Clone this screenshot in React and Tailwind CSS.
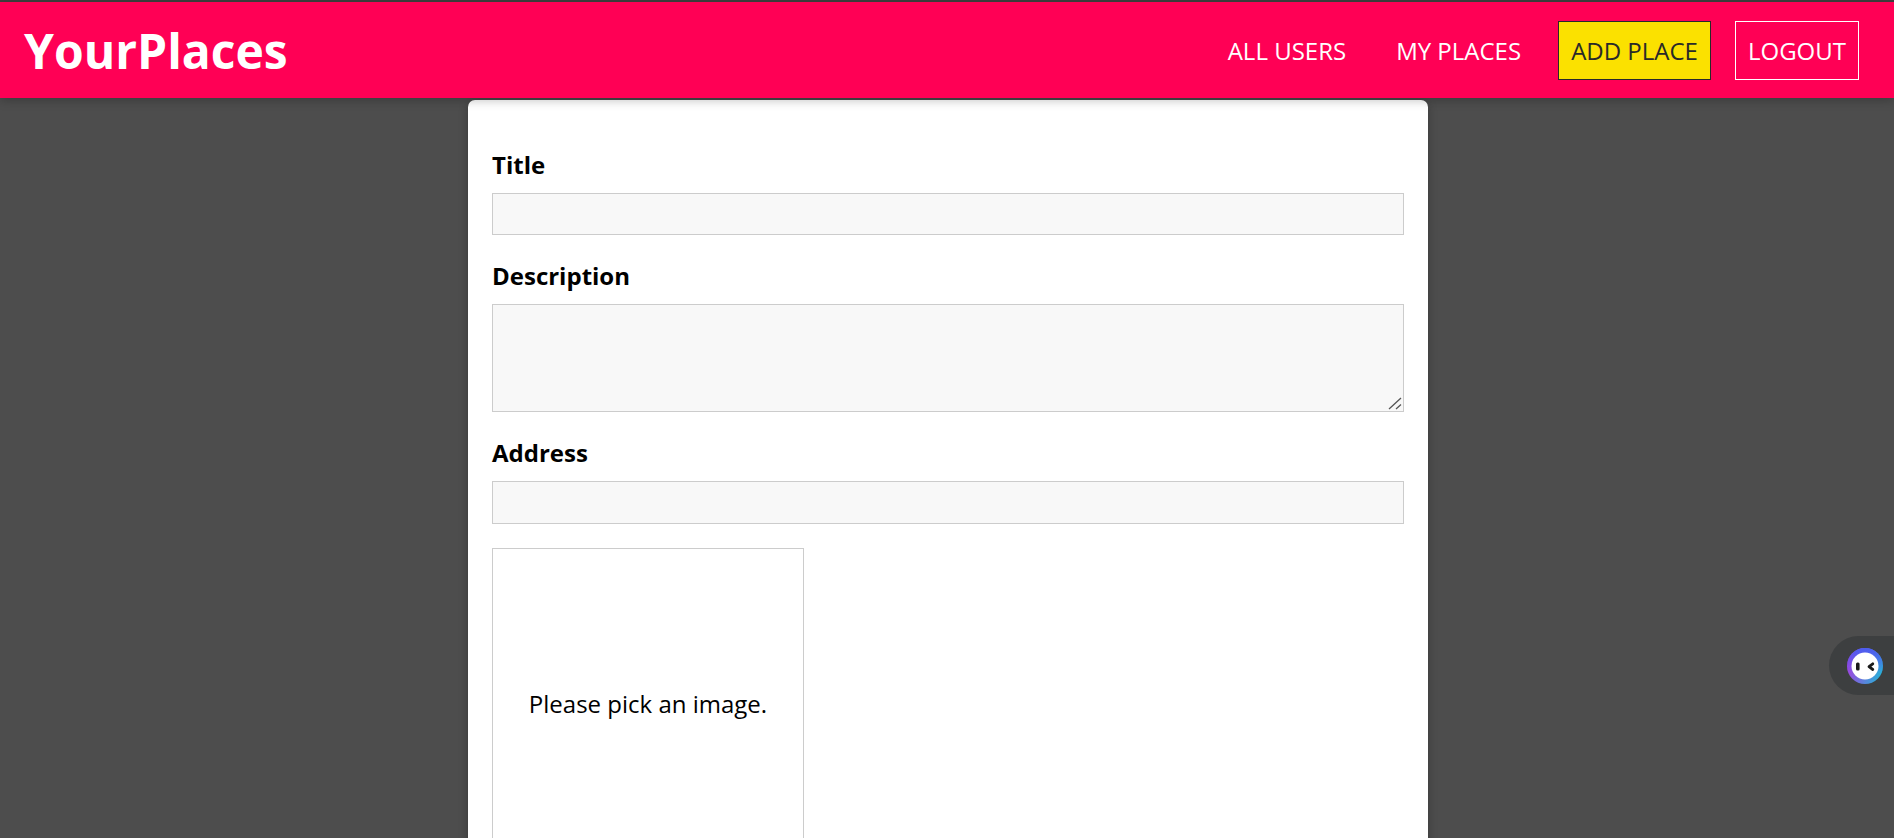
export default function App() {
  const labelClass = "mb-[12px] block text-[24px] font-bold leading-[33px] text-black";
  const fieldClass = "block w-full border border-[#cccccc] bg-[#f8f8f8] outline-none";

  return (
    <div className="relative h-[838px] overflow-hidden bg-[#4d4d4d] font-['Open_Sans',sans-serif]">
      {/* top strip above the header */}
      <div className="h-[2px] bg-[#404040]" />

      <header className="relative z-10 flex h-[96px] items-center justify-between bg-[#ff0055] pl-[24px] pr-[35px] shadow-[0_2px_10px_rgba(0,0,0,0.26)]">
        <h1 className="pt-[2px] text-[48px] font-bold leading-none text-white">YourPlaces</h1>
        <nav className="flex items-center">
          <a className="px-[13px] py-[12px] text-[24px] leading-[33px] text-white">ALL USERS</a>
          <a className="ml-[24px] px-[13px] py-[12px] text-[24px] leading-[33px] text-white">MY PLACES</a>
          <a className="ml-[24px] border border-[#292929] bg-[#fbe100] px-[12px] py-[12px] text-[24px] leading-[33px] text-[#292929]">ADD PLACE</a>
          <button className="ml-[24px] border border-white px-[12px] py-[12px] text-[24px] leading-[33px] text-white">LOGOUT</button>
        </nav>
      </header>

      <form className="ml-[468px] mt-[2px] h-[900px] w-[960px] rounded-[7px] bg-white p-[24px] shadow-[0_2px_10px_rgba(0,0,0,0.26)]">
        <div className="mt-[24px]">
          <label className={labelClass}>Title</label>
          <input type="text" className={`${fieldClass} h-[42px]`} />
        </div>
        <div className="mt-[24px]">
          <label className={labelClass}>Description</label>
          <div className="relative">
            <textarea rows={4} className={`${fieldClass} h-[108px] resize-none`} />
            {/* resize grip */}
            <svg className="absolute bottom-[2px] right-[2px]" width="14" height="13" viewBox="0 0 14 13">
              <path d="M1 12 L13 1 M8 12 L13 7.5" stroke="#555555" strokeWidth="1.3" fill="none" />
            </svg>
          </div>
        </div>
        <div className="mt-[24px]">
          <label className={labelClass}>Address</label>
          <input type="text" className={`${fieldClass} h-[43px]`} />
        </div>
        <div className="mt-[24px] flex h-[312px] w-[312px] items-center justify-center border border-[#cccccc]">
          <p className="-mt-[2px] text-[24px] leading-[33px] text-black">Please pick an image.</p>
        </div>
      </form>

      {/* floating assistant widget */}
      <div className="absolute right-0 top-[636px] z-20 flex h-[59px] w-[65px] items-center rounded-l-[30px] bg-[#3d3f40] pl-[18px]">
        <svg width="36" height="36" viewBox="0 0 36 36">
          <defs>
            <linearGradient id="ringBase" x1="0" y1="0.5" x2="1" y2="0.8">
              <stop offset="0" stopColor="#a63fe0" />
              <stop offset="1" stopColor="#20b8d8" />
            </linearGradient>
            <linearGradient id="ringTop" x1="0.5" y1="0" x2="0.5" y2="1">
              <stop offset="0" stopColor="#4a5cf0" />
              <stop offset="0.7" stopColor="#4a5cf0" stopOpacity="0" />
            </linearGradient>
          </defs>
          <circle cx="18" cy="18" r="18" fill="url(#ringBase)" />
          <circle cx="18" cy="18" r="18" fill="url(#ringTop)" />
          <circle cx="18" cy="18" r="13.5" fill="#ffffff" />
          <rect x="9" y="14.5" width="3.6" height="8" rx="1.5" fill="#1a1a1a" />
          <path d="M25.8 15.8 L22 18.7 L25.8 21.5" fill="none" stroke="#1a1a1a" strokeWidth="2.8" strokeLinecap="round" strokeLinejoin="round" />
        </svg>
      </div>
    </div>
  );
}
